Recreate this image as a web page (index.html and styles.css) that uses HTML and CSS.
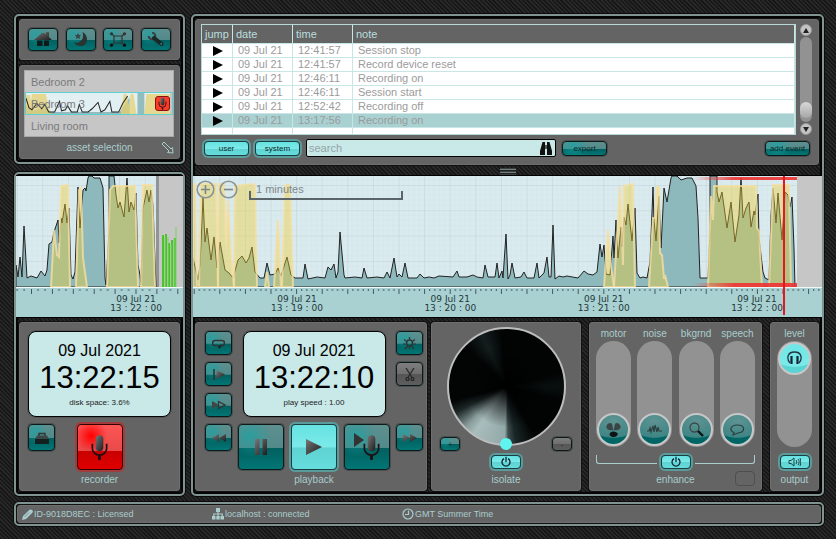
FILE: index.html
```html
<!DOCTYPE html>
<html lang="en">
<head>
    <meta charset="UTF-8">
    <meta name="viewport" content="width=device-width, initial-scale=1.0">
    <title>Recorder</title>
    <link rel="stylesheet" href="styles.css">
</head>
<body>
    <svg class="defs" aria-hidden="true">
        <defs>
            <linearGradient id="metal" x1="0" y1="0" x2="1" y2="1">
                <stop offset="0" stop-color="#777"/>
                <stop offset="1" stop-color="#1c1c1c"/>
            </linearGradient>
            <linearGradient id="red-fade" x1="0" y1="0" x2="1" y2="0">
                <stop offset="0" stop-color="#e33" stop-opacity="0"/>
                <stop offset="0.4" stop-color="#e33" stop-opacity="0.9"/>
                <stop offset="1" stop-color="#e33" stop-opacity="0.9"/>
            </linearGradient>
            <pattern id="grid" width="25.6" height="25.3" x="0.7" y="9" patternUnits="userSpaceOnUse">
                <path d="M5.1 0V26M10.2 0V26M15.4 0V26M20.5 0V26M0 5H26M0 10H26M0 15H26M0 20H26" stroke="#d2e4e8" stroke-width="0.5"/>
                <path d="M0 0H26M0 0V26" stroke="#bfd0d3" stroke-width="1"/>
            </pattern>
            <pattern id="ticks" width="25.6" height="7" x="0.7" patternUnits="userSpaceOnUse">
                <path d="M5.6 1V3M10.7 1V3M15.9 1V3M21 1V3M0.5 1V6" stroke="#456" stroke-width="1"/>
            </pattern>
            <pattern id="ticks-small" width="20.9" height="7" x="15" patternUnits="userSpaceOnUse">
                <path d="M7 1V3M14 1V3M0.5 1V6" stroke="#456" stroke-width="1"/>
            </pattern>
            <symbol id="mic" viewBox="0 0 20 28">
                <rect x="6" y="1" width="8" height="17" rx="4" fill="url(#metal)"/>
                <path d="M2.500 10v5a7.500 7 0 0 0 15 0v-5" fill="none" stroke="#1d1010" stroke-width="1.800"/>
                <path d="M10 22v5" stroke="#1d1010" stroke-width="3"/>
            </symbol>
            <symbol id="power" viewBox="0 0 12 12">
                <path d="M4 2.600a4 4 0 1 0 4 0M6 0.800V6" fill="none" stroke="#123" stroke-width="1.300"/>
            </symbol>
        </defs>
    </svg>

    <main class="desk">
        <section class="frame assets">
            <nav class="panel tools">
                <button class="btn" aria-label="Home"><svg viewBox="0 0 18 15" width="18" height="15"><path d="M0 8 8 1h2l2 1.500V0h3v5l3 3z" fill="url(#metal)"/><path d="M3 8.500h5.500V14H3zM10 8.500h5V14h-5z" fill="#0c1a1a"/></svg></button>
                <button class="btn" aria-label="Night mode"><svg viewBox="0 0 16 15" width="16" height="15"><path d="M9.500 0C16 3 15.500 14 8 14 4.500 14 2 12.500 1 10 6 12.500 12 8 9.500 0z" fill="#2b3333"/><path d="m5 1 1 2 2.200.3-1.600 1.500.4 2.200L5 6 3 7l.4-2.200L1.800 3.300 4 3z" fill="#3a4444"/></svg></button>
                <button class="btn" aria-label="Network"><svg viewBox="0 0 18 15" width="18" height="15"><path d="M5 4h8v7H5zM5 4 2 1M13 4l3-3M5 11l-3 3M13 11l3 3" fill="none" stroke="#333" stroke-width="1.200"/><circle cx="2.500" cy="1.800" r="1.600" fill="#333"/><circle cx="15.500" cy="1.800" r="1.600" fill="#333"/><circle cx="2.500" cy="13.200" r="1.600" fill="#111"/><circle cx="15.500" cy="13.200" r="1.600" fill="#111"/></svg></button>
                <button class="btn" aria-label="Settings"><svg viewBox="0 0 18 15" width="18" height="15"><path d="M5 .700A3.300 3.300 0 1 1 1.700 4" fill="none" stroke="#3a4444" stroke-width="2.200"/><path d="M7 6 14.500 12" stroke="#1d2525" stroke-width="4" stroke-linecap="round"/><circle cx="14.200" cy="11.800" r="0.900" fill="#3a8c8c"/></svg></button>
            </nav>
            <div class="panel asset-panel">
                <div class="asset-list">
                    <button class="asset">Bedroom 2</button>
                    <button class="asset selected">
                        <svg class="asset-wave" viewBox="0 0 148 20" preserveAspectRatio="none">
                            <path d="M0 0H146V20H0z" fill="#e2f0f4"/>
                            <path d="M113 0h7v20h-7zM0 12 6 17 20 14 25 18H95L105 4V20H0z" fill="#93bcbf"/>
                            <path d="M0 20V2H4L5 8 6 1H20L25 20zM96 20 99 1H102L105 14 106 1H109L112 20zM120 20 122 1H146V20z" fill="#e6d070" fill-opacity="0.75"/>
                            <path d="M0 5 3 14 6 16 11 10 16 15 19 11 23 18H29L34 8 36 17 40 16 42 12 46 18H52L54 11 57 18H63L67 15 73 9 76 18 80 16 85 8 87 18H94L98 10 103 3" fill="none" stroke="#222"/>
                        </svg>
                        <span class="asset-name">Bedroom 3</span>
                        <span class="asset-rec"><svg width="11" height="13"><use href="#mic"/></svg></span>
                    </button>
                    <button class="asset">Living room</button>
                </div>
                <div class="asset-foot">
                    <span class="caption">asset selection</span>
                    <svg viewBox="0 0 13 13" width="13" height="13"><path d="M1 3 3 1 10 8 11.500 6.500 12 12 6.500 11.500 8 10z" fill="none" stroke="#a9cdcc"/></svg>
                </div>
            </div>
        </section>

        <section class="frame recorder">
            <div class="chart chart-small">
                <svg class="plot" viewBox="0 0 167 111" preserveAspectRatio="none">
                    <path d="M0 0H167V111H0z" fill="#daebf0"/>
                    <path d="M0 0H167V111H0z" fill="url(#grid)"/>
                    <path d="M140 0H143V111H140z" fill="#8f9496"/>
                    <path d="M143 0H167V111H143z" fill="#c6c6c6"/>
                    <path d="M0 89 2 101 4 81 6 101 8 50 11 102 15 100 21 102 25 95 29 100 31 94 33 68 36 66 38 56 42 44 43 67 45 42 46 47 49 28 51 47 53 32 55 99 57 103 59 96 62 11 64 52 67 14 69 12 70 15 72 2 73 0 76 0 78 2 84 2 87 12 89 102 90 109 93 56 93 0 98 0 100 19 102 32 104 26 108 41 111 2 113 36 115 26 118 34 120 17 122 89 124 99 125 109 127 32 131 14 133 26 135 14 137 29 140 111 0 111z" fill="#8eb9bc" stroke="#222"/>
                    <g class="speech-band">
                        <path d="M35 111 38 54 41 79 43 81 45 10 52 9 54 111z"/>
                        <path d="M60 111 63 14 65 12 67 82 71 111z"/>
                        <path d="M91 111 94 14 97 10H119L122 111z"/>
                        <path d="M125 111 127 9H136L139 111z"/>
                    </g>
                    <path d="M147 111V59M150 111V58M153 111V67M156 111V64M159 111V62" stroke="#4cc22e" stroke-width="2"/>
                    <path d="M149 111V61M152 111V61M155 111V69M158 111V63M160 111V51" stroke="#7bd062"/>
                </svg>
                <div class="axis">
                    <svg class="ticks" width="100%" height="7"><rect width="100%" height="7" fill="url(#ticks-small)"/></svg>
                    <div class="axis-labels">
                        <span>09 Jul 21<br>13 : 22 : 00</span>
                    </div>
                </div>
            </div>
            <div class="panel recorder-panel">
                <div class="lcd">
                    <span class="lcd-date">09 Jul 2021</span>
                    <span class="lcd-time">13:22:15</span>
                    <span class="lcd-note">disk space: 3.6%</span>
                </div>
                <div class="rec-row">
                    <button class="btn btn-side" aria-label="Archive"><svg viewBox="0 0 14 12" width="14" height="12"><path d="M4 4V1.500H10V4" fill="none" stroke="#333" stroke-width="1.500"/><path d="M2 3.500H12L14 7H0z" fill="#3c4848"/><path d="M0 7h14v5H0z" fill="#132020"/></svg></button>
                    <button class="btn btn-big red" aria-label="Record"><svg width="19" height="27"><use href="#mic"/></svg></button>
                </div>
                <span class="caption">recorder</span>
            </div>
        </section>

        <section class="frame player">
            <div class="panel events">
                <div class="events-top">
                    <div class="table-box">
                        <table>
                            <thead>
                                <tr><th class="col-jump">jump</th><th class="col-date">date</th><th class="col-time">time</th><th>note</th></tr>
                            </thead>
                            <tbody id="event-rows"></tbody>
                        </table>
                    </div>
                    <div class="scroller">
                        <button class="scroll-arrow" aria-label="Scroll up"><svg viewBox="0 0 6 5" width="6" height="5"><path d="M3 0 6 5H0z" fill="#222"/></svg></button>
                        <div class="scroll-track"><div class="scroll-thumb"></div></div>
                        <button class="scroll-arrow" aria-label="Scroll down"><svg viewBox="0 0 6 5" width="6" height="5"><path d="M3 5 6 0H0z" fill="#222"/></svg></button>
                    </div>
                </div>
                <div class="events-bar">
                    <button class="btn btn-text lit">user</button>
                    <button class="btn btn-text lit">system</button>
                    <div class="search">
                        <input type="text" placeholder="search" aria-label="search">
                        <svg viewBox="0 0 12 13" width="12" height="13"><path d="M2.500 0H5V13H0V9zM7 0H9.500L12 9V13H7zM5 3h2v4H5z" fill="#111"/><path d="M6 0V13" stroke="#c9e8e8" stroke-width="0.700"/></svg>
                    </div>
                    <button class="btn btn-text">export</button>
                    <button class="btn btn-text push">add event</button>
                </div>
            </div>
            <div class="grip"></div>

            <div class="chart">
                <svg class="plot" viewBox="0 0 629 111" preserveAspectRatio="none">
                    <path d="M0 0H629V111H0z" fill="#daebf0"/>
                    <path d="M0 0H629V111H0z" fill="url(#grid)"/>
                    <path d="M604 0H629V111H604z" fill="#c6c6c6"/>
                    <path d="M0 82 5 104 7 89 10 22 12 66 14 52 18 84 21 61 24 92 27 66 32 94 36 97 40 102 45 84 49 80 53 87 56 82 59 71 62 96 67 102 71 102 74 87 77 99 82 98 85 92 88 100 94 81 98 99 102 102 110 102 112 88 115 103 124 101 132 102 135 91 138 94 141 88 143 102 145 96 147 56 151 99 152 102 162 101 169 102 171 92 174 102 184 101 191 102 194 96 197 102 201 82 204 101 206 98 209 101 212 87 215 102 224 102 227 98 231 102 236 101 241 102 246 100 260 101 264 95 266 101 274 101 280 99 284 101 290 102 292 89 295 101 302 101 304 87 306 102 309 95 310 102 313 58 315 103 317 99 319 87 322 102 328 101 331 96 334 102 341 102 344 87 346 102 351 97 354 81 356 101 358 101 360 49 362 103 366 100 370 101 374 100 385 102 391 95 395 98 400 99 404 96 407 68 409 81 411 69 413 98 417 99 420 60 421 82 423 44 425 82 428 51 429 71 431 41 433 49 435 28 439 65 442 32 444 97 447 102 450 101 454 102 457 86 460 11 461 45 463 65 466 20 468 72 471 12 474 26 478 2 479 0 484 0 488 4 494 2 499 2 503 10 505 42 507 102 515 102 517 56 517 0 524 0 524 16 526 26 529 16 534 52 538 26 542 66 546 39 548 2 550 42 553 32 556 26 558 51 561 35 562 39 565 18 566 62 570 96 572 102 576 104 578 39 580 12 583 47 585 17 589 64 592 16 595 19 597 31 599 21 601 72 602 111 0 111z" fill="#8eb9bc" stroke="#222"/>
                    <g class="speech-band">
                        <path d="M0 111V8H2L4 111z"/>
                        <path d="M6 111 8 8H23L25 111z"/>
                        <path d="M25 111 26 8H31L33 70 35 24 38 80 41 111z"/>
                        <path d="M41 111 42 10 60 8 62 10 64 111z"/>
                        <path d="M72 111 74 96 76 111z"/>
                        <path d="M81 111 85 44 88 111z"/>
                        <path d="M89 111 92 10 95 8 97 10 100 111z"/>
                        <path d="M411 111 415 54 418 90 421 111z"/>
                        <path d="M421 111 424 60 427 10 430 89 431 10 440 8 442 111z"/>
                        <path d="M456 111 460 42H462L464 11H466L467 77 469 79 471 103 472 99 475 111z"/>
                        <path d="M515 111 518 20 520 44 521 10H563L564 52 566 55 569 111z"/>
                        <path d="M576 111 580 9H596L598 111z"/>
                    </g>
                    <path d="M500 1H604V4H500zM500 107H604V111H500z" fill="url(#red-fade)"/>
                </svg>
                <div class="axis">
                    <svg class="ticks" width="100%" height="7"><rect width="100%" height="7" fill="url(#ticks)"/></svg>
                    <div class="axis-labels">
                        <span>09 Jul 21<br>13 : 19 : 00</span>
                        <span>09 Jul 21<br>13 : 20 : 00</span>
                        <span>09 Jul 21<br>13 : 21 : 00</span>
                        <span>09 Jul 21<br>13 : 22 : 00</span>
                    </div>
                </div>
                <div class="zoom-tools">
                    <button class="zoom-btn" aria-label="Zoom in"><svg viewBox="0 0 19 19" width="19" height="19"><path d="M9.500 5V14M5 9.500H14" stroke="#7d878a" stroke-width="1.600"/><circle cx="9.500" cy="9.500" r="8.300" fill="none" stroke="#8b9598" stroke-width="1.600"/></svg></button>
                    <button class="zoom-btn" aria-label="Zoom out"><svg viewBox="0 0 19 19" width="19" height="19"><path d="M5 9.500H14" stroke="#7d878a" stroke-width="1.600"/><circle cx="9.500" cy="9.500" r="8.300" fill="none" stroke="#8b9598" stroke-width="1.600"/></svg></button>
                    <span class="scale">1 minutes</span>
                </div>
                <div class="cursor" style="left: 94%"></div>
            </div>

            <div class="controls">
                <div class="panel playback">
                    <div class="side">
                        <button class="btn btn-side" aria-label="Loop"><svg viewBox="0 0 13 11" width="13" height="11"><path d="M5 7.500H3a2.500 2.500 0 0 1 0-5h7a2.500 2.500 0 0 1 0 5H8" fill="none" stroke="#333" stroke-width="1.600"/><path d="M5 7.500h5L7.500 11z" fill="#222"/></svg></button>
                        <button class="btn btn-side" aria-label="Play from mark"><svg viewBox="0 0 12 11" width="12" height="11"><path d="M1 0V11" stroke="#333" stroke-width="1.600"/><path d="M3.500 1 12 5.500 3.500 10z" fill="url(#metal)"/></svg></button>
                        <button class="btn btn-side" aria-label="Fast play"><svg viewBox="0 0 14 10" width="14" height="10"><path d="M0 1 7 5 0 9z" fill="#444"/><path d="M6.500 1.500 13 5 6.500 8.500z" fill="none" stroke="#333" stroke-width="1.200"/></svg></button>
                        <button class="btn btn-side last" aria-label="Rewind"><svg viewBox="0 0 14 10" width="14" height="10"><path d="M7 1 0 5 7 9zM14 1 7 5 14 9z" fill="url(#metal)"/></svg></button>
                    </div>
                    <div class="deck">
                        <div class="lcd">
                            <span class="lcd-date">09 Jul 2021</span>
                            <span class="lcd-time">13:22:10</span>
                            <span class="lcd-note">play speed : 1.00</span>
                        </div>
                        <div class="transport">
                            <button class="btn btn-big" aria-label="Pause"><svg viewBox="0 0 12 16" width="12" height="16"><path d="M0 0H4.500V16H0zM7.500 0H12V16H7.500z" fill="url(#metal)"/></svg></button>
                            <button class="btn btn-big lit" aria-label="Play"><svg viewBox="0 0 16 16" width="16" height="16"><path d="M0 0 16 8 0 16z" fill="url(#metal)"/></svg></button>
                            <button class="btn btn-big" aria-label="Play at recorder"><svg viewBox="0 0 27 28" width="27" height="28"><path d="M0 0 10 7 0 14z" fill="#333"/><use href="#mic" x="8" y="1" width="19" height="27"/></svg></button>
                        </div>
                        <span class="caption">playback</span>
                    </div>
                    <div class="side">
                        <button class="btn btn-side" aria-label="Brightness"><svg viewBox="0 0 13 13" width="13" height="13"><circle cx="6.500" cy="6" r="3" fill="none" stroke="#2c3434" stroke-width="1.500"/><path d="M6.500 0V2M1 2.500 3 4M12 2.500 10 4M0 7H2.500M10.500 7H13M2 12 4.500 9M11 12 8.500 9M6.500 10V12" stroke="#2c3434" stroke-width="1.200"/></svg></button>
                        <button class="btn btn-side grey" aria-label="Cut"><svg viewBox="0 0 10 13" width="10" height="13"><path d="M1 0 7 9.500M9 0 3 9.500" stroke="#2a2a2a" stroke-width="1.300"/><circle cx="2.500" cy="11" r="1.500" fill="none" stroke="#222" stroke-width="1.200"/><circle cx="7.500" cy="11" r="1.500" fill="none" stroke="#222" stroke-width="1.200"/></svg></button>
                        <button class="btn btn-side last" aria-label="Forward"><svg viewBox="0 0 14 10" width="14" height="10"><path d="M0 1 7 5 0 9zM7 1 14 5 7 9z" fill="url(#metal)"/></svg></button>
                    </div>
                </div>

                <div class="panel isolate">
                    <div class="dial"><span class="dial-knob"></span></div>
                    <div class="dial-steps">
                        <button class="btn btn-mini">+</button>
                        <button class="btn btn-mini grey">-</button>
                    </div>
                    <button class="btn btn-power lit" aria-label="Isolate on"><svg width="12" height="12"><use href="#power"/></svg></button>
                    <span class="caption">isolate</span>
                </div>

                <div class="panel enhance">
                    <div class="sliders">
                        <div class="slider">
                            <label for="motor">motor</label>
                            <input type="range" id="motor" min="0" max="100" value="0">
                            <svg viewBox="0 0 15 15" width="15" height="15"><path d="M7.300 8C3 9-.500 7 .500 4S5 0 6 2zM7.700 8C12 9 15.500 7 14.500 4S10 0 9 2z" fill="#3a4444"/><path d="M4 11c2-2 5-2 7.500 0 1 2-1.500 4-4 4s-5-2-3.500-4z" fill="#0c1414"/></svg>
                        </div>
                        <div class="slider">
                            <label for="noise">noise</label>
                            <input type="range" id="noise" min="0" max="100" value="0">
                            <svg viewBox="0 0 15 15" width="15" height="15"><path d="M0 9H2L3 6 4 10 6 4 7 10 8 3 10 10 11 5 12 9H15" fill="none" stroke="#2c4040" stroke-width="1.200"/></svg>
                        </div>
                        <div class="slider">
                            <label for="bkgrnd">bkgrnd</label>
                            <input type="range" id="bkgrnd" min="0" max="100" value="0">
                            <svg viewBox="0 0 15 15" width="15" height="15"><circle cx="5.500" cy="5.500" r="4.500" fill="none" stroke="#3a4848" stroke-width="1.300"/><path d="M9 9 14 14" stroke="#0a1414" stroke-width="2.400"/></svg>
                        </div>
                        <div class="slider">
                            <label for="speech">speech</label>
                            <input type="range" id="speech" min="0" max="100" value="0">
                            <svg viewBox="0 0 15 15" width="15" height="15"><path d="M4 10.500C-1 9 0 3 7.500 3S16 10 8 11L3 13z" fill="none" stroke="#2c4040" stroke-width="1.200"/></svg>
                        </div>
                    </div>
                    <div class="bracket"><button class="btn btn-power lit" aria-label="Enhance on"><svg width="12" height="12"><use href="#power"/></svg></button></div>
                    <div class="enhance-foot">
                        <span class="caption">enhance</span>
                        <button class="blank" aria-label="Preset"></button>
                    </div>
                </div>

                <div class="panel output">
                    <div class="slider top">
                        <label for="level">level</label>
                        <input type="range" id="level" class="bright" min="0" max="100" value="100">
                        <svg viewBox="0 0 15 14" width="15" height="14"><path d="M3 12C-.500 8 0 1 7.500 1S15.500 8 12 12" fill="none" stroke="#234" stroke-width="1.300"/><path d="M4.500 5V13M10.500 5V13" stroke="#123" stroke-width="2.200"/></svg>
                    </div>
                    <button class="btn btn-power lit" aria-label="Speaker"><svg viewBox="0 0 13 10" width="13" height="10"><path d="M1 3.500H3L6 1V9L3 6.500H1zM8 3C9 4 9 6 8 7M10 2C11.500 4 11.500 6 10 8M12 1C13 4 13 6 12 9" fill="none" stroke="#244" stroke-width="1"/></svg></button>
                    <span class="caption">output</span>
                </div>
            </div>
        </section>

        <footer class="frame status">
            <div class="panel status-bar">
                <span><svg viewBox="0 0 11 11" width="11" height="11"><path d="M0 11 1 7 7.500.800Q9-.200 10.300 1.200 11.500 2.500 10.300 3.700L4 10z" fill="#a9cdcc"/><path d="M2.500 8 7 3.500" stroke="#647" stroke-width="0.500"/></svg>ID-9018D8EC : Licensed</span>
                <span><svg viewBox="0 0 12 12" width="12" height="12"><path d="M4 0H8V4H4zM0 8H3.500V11.500H0zM4.300 8H7.800V11.500H4.300zM8.500 8H12V11.500H8.500z" fill="#a9cdcc"/><path d="M6 4V8M1.800 8V6H10.200V8" fill="none" stroke="#a9cdcc" stroke-width="1.200"/></svg>localhost : connected</span>
                <span><svg viewBox="0 0 12 12" width="12" height="12"><circle cx="6" cy="6" r="5" fill="none" stroke="#a9cdcc" stroke-width="1.200"/><path d="M6.500 2.500V6.500H3" fill="none" stroke="#a9cdcc" stroke-width="1.200"/></svg>GMT Summer Time</span>
            </div>
        </footer>
    </main>

    <script>
        let events = [
            ["09 Jul 21", "12:41:57", "Session stop"],
            ["09 Jul 21", "12:41:57", "Record device reset"],
            ["09 Jul 21", "12:46:11", "Recording on"],
            ["09 Jul 21", "12:46:11", "Session start"],
            ["09 Jul 21", "12:52:42", "Recording off"],
            ["09 Jul 21", "13:17:56", "Recording on"]
        ];

        let rows = "";
        events.forEach((e, i) => {
            rows += `<tr class="${i == events.length - 1 ? "current" : ""}">
                <td class="jump"><button aria-label="Jump"><svg viewBox="0 0 10 10" width="10" height="10"><path d="M0 0 10 5 0 10z"/></svg></button></td>
                <td>${e[0]}</td>
                <td>${e[1]}</td>
                <td>${e[2]}</td>
            </tr>`;
        });
        rows += "<tr><td></td><td></td><td></td><td></td></tr>";
        document.getElementById("event-rows").innerHTML = rows;
    </script>
</body>
</html>
```
FILE: styles.css
```css
* {
    box-sizing: border-box;
}

body {
    margin: 0;
    min-height: 100vh;
    background: repeating-linear-gradient(45deg, #161616 0, #161616 1px, #292929 2px, #292929 3px);
    font-family: "Liberation Sans", Arial, sans-serif;
    font-size: 11px;
    color: #a9cdcc;
}

button, input {
    font-family: inherit;
    margin: 0;
    padding: 0;
}

button {
    cursor: pointer;
}

svg {
    display: block;
    flex: none;
}

.defs {
    position: absolute;
    width: 0;
    height: 0;
}

.desk {
    display: grid;
    grid-template-columns: 171px 1fr;
    grid-template-rows: auto 1fr auto;
    column-gap: 6px;
    padding: 14px 12px 13px 14px;
}

.frame {
    border: 2px solid #7f9391;
    border-radius: 5px;
    box-shadow: 0 0 0 1px #0b0b0b, inset 0 0 0 2px #050505;
    min-width: 0;
}

.panel {
    background: #646464;
    border: 1px solid #6e6e6e;
    border-radius: 3px;
    box-shadow: 0 0 0 1px #111;
}

.caption {
    font-size: 10px;
    line-height: 12px;
    text-align: center;
}

/* buttons */
.btn {
    display: flex;
    align-items: center;
    justify-content: center;
    border: 1px solid #0d1a1a;
    border-radius: 4px;
    background: radial-gradient(circle at 25% 25%, #17a5a5b0, transparent 45%),
        linear-gradient(#5f8f8f, #528a8a 52%, #00605f 53%, #027675);
    box-shadow: 0 0 0 1px #4a4f4f;
    color: #0e2a2c;
}

.btn.lit {
    border-color: #1a3f42;
    background: linear-gradient(#66e2e2, #7ce9e9 50%, #5fd2d2 52%, #66dddd);
    box-shadow: 0 0 0 2px #5a9c9c;
}

.btn.grey {
    background: linear-gradient(#7d7d7d, #6e6e6e 50%, #565656 52%, #5e5e5e);
}

.btn.red {
    border-color: #300;
    background: radial-gradient(circle at 30% 25%, #f00, transparent 35%),
        linear-gradient(#f55, #e84a4a 58%, #c80000 59%, #e00000);
    box-shadow: 0 0 0 2px #a33c3c;
}

.btn-text {
    width: 45px;
    height: 15px;
    font-size: 8px;
}

.btn-side {
    width: 27px;
    height: 100%;
}

.btn-big {
    width: 46px;
    height: 46px;
}

.btn-mini {
    width: 20px;
    height: 14px;
    font-size: 8px;
}

.btn-power {
    width: 30px;
    height: 14px;
}

/* asset list */
.assets {
    display: flex;
    flex-direction: column;
    gap: 5px;
    padding: 3px;
    margin-bottom: 8px;
}

.tools {
    display: flex;
    justify-content: space-between;
    padding: 8px;
}

.tools .btn {
    width: 30px;
    height: 23px;
}

.asset-panel {
    padding: 4px 4px 2px;
}

.asset-list {
    margin-right: 1px;
    border: 1px solid #aaa;
    background: #c6c6c6;
}

.asset {
    position: relative;
    display: flex;
    align-items: center;
    justify-content: space-between;
    width: 100%;
    height: 21px;
    padding: 0 3px 0 6px;
    border: 0;
    background: none;
    font-size: 11px;
    color: #7b7b7b;
}

.asset.selected {
    height: 23px;
    border: 1px solid #5fd0d0;
    padding: 0 2px 0 5px;
}

.asset-wave {
    position: absolute;
    inset: 0;
    width: 100%;
    height: 100%;
}

.asset-name, .asset-rec {
    position: relative;
}

.asset-rec {
    display: flex;
    justify-content: center;
    width: 15px;
    height: 15px;
    border: 1px solid #811;
    border-radius: 3px;
    background: #fa3c28;
}

.asset-foot {
    display: grid;
    grid-template-columns: 13px 1fr 13px;
    align-items: center;
    padding: 4px 1px 2px;
}

.asset-foot .caption {
    grid-column: 2;
}

/* charts */
.chart {
    position: relative;
    border-top: 1px solid #000;
    border-bottom: 1px solid #000;
}

.plot {
    width: 100%;
    height: 111px;
}

.speech-band path {
    fill: #f0cc2c;
    fill-opacity: 0.4;
    stroke: #f5dea0;
    stroke-width: 2;
    stroke-opacity: 0.8;
}

.axis {
    height: 30px;
    border-top: 1px solid #eefafa;
    background: #a9d1d1;
}

.axis-labels {
    display: flex;
    justify-content: space-between;
    padding: 0 39px 0 78px;
    font: 9px/9px "DejaVu Sans", sans-serif;
    text-align: center;
    white-space: nowrap;
    color: #24383b;
}

.chart-small .axis-labels {
    justify-content: flex-end;
    padding: 0 21px 0 0;
}

.zoom-tools {
    position: absolute;
    left: 3px;
    top: 3px;
    display: flex;
    gap: 4px;
}

.zoom-btn {
    border: 0;
    background: none;
}

.scale {
    position: relative;
    width: 154px;
    margin-left: 7px;
    padding-left: 7px;
    line-height: 21px;
    color: #7d878a;
}

.scale::after {
    content: "";
    position: absolute;
    left: 0;
    right: 0;
    bottom: 0;
    top: 12px;
    border: 2px solid #596568;
    border-top: 0;
}

.cursor {
    position: absolute;
    top: 0;
    bottom: 2px;
    width: 2px;
    margin-left: -1px;
    background: #e8151c;
}

/* recorder */
.recorder {
    padding-top: 1px;
}

.recorder-panel {
    display: flex;
    flex-direction: column;
    height: 169px;
    margin: 4px 3px 3px;
    padding: 8px 8px 0;
}

.lcd {
    display: flex;
    flex-direction: column;
    align-items: center;
    width: 143px;
    height: 86px;
    padding-top: 9px;
    border: 1px solid #050505;
    border-radius: 8px;
    background: #c9e8e8;
    box-shadow: 0 0 0 1px #555;
    color: #000;
}

.lcd-date {
    font-size: 16px;
    line-height: 20px;
}

.lcd-time {
    font-size: 31px;
    line-height: 34px;
}

.lcd-note {
    font-size: 8px;
    line-height: 16px;
    color: #222;
}

.rec-row {
    display: grid;
    grid-template-columns: 1fr auto 1fr;
    margin: 7px 0 4px;
}

.rec-row .btn-side {
    height: 27px;
}

/* events */
.player {
    grid-column: 2;
    grid-row: 1 / 3;
    padding-top: 3px;
}

.events {
    margin: 0 3px 0 2px;
    padding: 4px 5px 7px 5px;
}

.events-top {
    display: flex;
    gap: 3px;
}

.table-box {
    flex: 1;
    height: 111px;
    overflow: hidden;
    border: 1px solid #b6d8d8;
    background: #fff;
}

table {
    width: 100%;
    table-layout: fixed;
    border-collapse: separate;
    border-spacing: 0;
}

th, td {
    padding: 0 0 0 5px;
    text-align: left;
    font-weight: normal;
    font-size: 11px;
    border-right: 1px solid #c9e6e6;
    border-bottom: 1px solid #c9e6e6;
}

th {
    height: 19px;
    padding-left: 3px;
    background: #646464;
    color: #b9dede;
}

td {
    height: 14px;
    line-height: 13px;
    color: #9b9b9b;
}

.col-jump {
    width: 31px;
}

.col-date, .col-time {
    width: 60px;
}

.current td {
    background: #a9d1d1;
}

.jump button {
    display: block;
    margin-left: 6px;
    border: 0;
    background: none;
}

.scroller {
    display: flex;
    flex-direction: column;
    align-items: center;
    gap: 1px;
    width: 14px;
}

.scroll-arrow {
    display: flex;
    align-items: center;
    justify-content: center;
    width: 12px;
    height: 12px;
    border: 1px solid #999;
    border-radius: 50%;
    background: #c4c4c4;
}

.scroll-track {
    display: flex;
    flex-direction: column;
    justify-content: flex-end;
    flex: 1;
    width: 12px;
    padding-bottom: 4px;
    border-radius: 6px;
    background: #929292;
}

.scroll-thumb {
    height: 16px;
    border-radius: 6px;
    background: linear-gradient(#d8d8d8, #a6a6a6);
}

.events-bar {
    display: flex;
    align-items: center;
    gap: 6px;
    padding: 4px 3px 0 3px;
}

.search {
    display: flex;
    align-items: center;
    width: 250px;
    height: 18px;
    padding-right: 3px;
    border: 1px solid #000;
    border-radius: 2px;
    background: #c9e8e8;
}

.search input {
    flex: 1;
    min-width: 0;
    padding-left: 2px;
    border: 0;
    outline: 0;
    background: none;
    font-size: 11px;
}

.search input::placeholder {
    color: #92a5a5;
}

.push {
    margin-left: auto;
}

.grip {
    width: 16px;
    height: 7px;
    margin: 3px auto 0;
    background: repeating-linear-gradient(#3a3f3f 0, #3a3f3f 1px, #718080 1px, #718080 2px, #222 2px, #222 3px);
}

/* lower controls */
.controls {
    display: flex;
    gap: 8px;
    margin: 4px 3px 3px 2px;
}

.controls .panel {
    height: 169px;
}

.controls .playback {
    display: flex;
    justify-content: space-between;
    flex: 232 1 232px;
    padding: 8px 3px 0 9px;
}

.side {
    display: grid;
    grid-template-rows: 24px 24px 24px 27px;
    align-content: start;
    gap: 7px;
}

.side .last {
    grid-row: 4;
}

.deck {
    display: flex;
    flex-direction: column;
    align-items: center;
}

.transport {
    display: flex;
    gap: 7px;
    margin: 7px 0 4px;
}

.isolate {
    display: flex;
    flex-direction: column;
    align-items: center;
    flex: 150 1 150px;
    margin-left: -4px;
    padding-top: 4px;
}

.dial {
    position: relative;
    width: 119px;
    height: 119px;
    border: 2px solid #bdbdbd;
    border-radius: 50%;
    background: radial-gradient(circle, #000 3%, transparent 50%),
        conic-gradient(#020404 0deg, #020404 75deg, #090f0f 90deg, #020404 105deg, #020404 150deg, #1a2626 170deg, #3c4c4c 178deg, #93a8a8 182deg, #a9bdbd 215deg, #8a9d9d 225deg, #1c2525 243deg, #030505 255deg, #030505 315deg, #141d1d 335deg, #020404 355deg);
}

.dial-knob {
    position: absolute;
    left: 50%;
    bottom: -6px;
    width: 12px;
    height: 12px;
    margin-left: -6px;
    border-radius: 50%;
    background: #5ff5ee;
}

.dial-steps {
    display: flex;
    justify-content: space-between;
    align-self: stretch;
    margin: -9px 8px 4px;
}

.isolate .caption {
    margin-top: 5px;
}

.enhance {
    flex: 173 1 173px;
    padding: 5px 6px 0;
}

.sliders {
    display: flex;
    justify-content: space-between;
}

.slider {
    position: relative;
    display: flex;
    flex-direction: column;
    align-items: center;
    width: 35px;
}

.slider label {
    font-size: 10px;
    line-height: 12px;
    margin-bottom: 1px;
}

.slider input {
    appearance: none;
    -webkit-appearance: none;
    writing-mode: vertical-lr;
    direction: rtl;
    width: 35px;
    height: 106px;
    padding: 1px;
    border-radius: 18px;
    background: #929292;
}

.slider input::-webkit-slider-thumb {
    -webkit-appearance: none;
    width: 33px;
    height: 33px;
    border: 2px solid #c8c8c8;
    border-radius: 50%;
    background: radial-gradient(ellipse 90% 60% at 50% 20%, #5e9393 0, #3f8585 95%, transparent 100%), #006665;
}

.slider input.bright::-webkit-slider-thumb {
    background: radial-gradient(ellipse 90% 60% at 50% 20%, #6fe6e6 0, #7be9e9 95%, transparent 100%), #5ad3d3;
}

.slider svg {
    position: absolute;
    bottom: 10px;
    pointer-events: none;
}

.slider.top svg {
    bottom: auto;
    top: 23px;
}

.bracket {
    display: flex;
    align-items: center;
    justify-content: center;
    gap: 4px;
    margin-top: 8px;
    height: 14px;
}

.bracket::before, .bracket::after {
    content: "";
    flex: 1;
    align-self: flex-start;
    height: 8px;
    border-bottom: 1px solid #a9cdcc;
    border-left: 1px solid #a9cdcc;
    border-radius: 0 0 0 3px;
}

.bracket::after {
    border-left: 0;
    border-right: 1px solid #a9cdcc;
    border-radius: 0 0 3px 0;
}

.enhance-foot {
    display: grid;
    grid-template-columns: 20px 1fr 20px;
    align-items: end;
    margin-top: 2px;
}

.enhance-foot .caption {
    grid-column: 2;
}

.blank {
    height: 15px;
    border: 1px solid #4e4e4e;
    border-radius: 4px;
    background: none;
}

.output {
    display: flex;
    flex-direction: column;
    align-items: center;
    flex: 49 1 49px;
    padding-top: 5px;
}

.output .btn {
    margin: 8px 0 5px;
}

/* status bar */
.status {
    grid-column: 1 / 3;
    margin-top: 6px;
    padding: 1px;
}

.status-bar {
    display: flex;
    padding: 0 4px;
    font-size: 9px;
    line-height: 16px;
}

.status-bar span {
    display: flex;
    align-items: center;
    gap: 1px;
    width: 190px;
}
```
